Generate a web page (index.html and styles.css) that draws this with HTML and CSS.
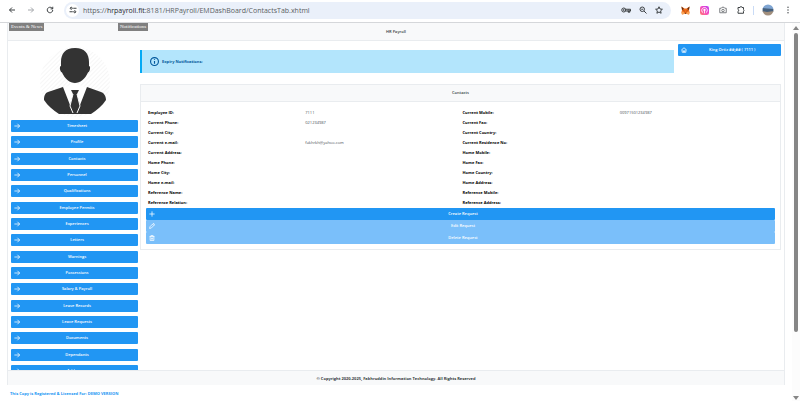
FILE: index.html
```html
<!DOCTYPE html>
<html lang="en">
<head>
<meta charset="utf-8">
<title>HR Payroll</title>
<meta name="viewport" content="width=device-width, initial-scale=1">
<link rel="stylesheet" href="styles.css">
</head>
<body>
<svg class="defs" aria-hidden="true">
  <symbol id="arrow" viewBox="0 0 16 16"><path d="M1 8h14M9 2l6 6-6 6"/></symbol>
</svg>
<header class="toolbar">
  <div class="history">
    <button aria-label="Back"><svg class="ico" viewBox="0 0 16 16"><path d="M14 8H3M8 3L3 8l5 5"/></svg></button>
    <button aria-label="Forward" class="dim"><svg class="ico" viewBox="0 0 16 16"><path d="M2 8h11M8 3l5 5-5 5"/></svg></button>
    <button aria-label="Reload"><svg class="ico" viewBox="0 0 16 16"><path d="M13.500 8A5.500 5.500 0 1 1 11.800 4L13.500 5.600M13.500 1.500v4.300H9.200"/></svg></button>
  </div>
  <div class="address">
    <button class="site" aria-label="Site information"><svg class="ico" viewBox="0 0 16 16"><circle cx="4.500" cy="4.500" r="2"/><path d="M8.500 4.500H15M1 11.500h6.500"/><circle cx="11.500" cy="11.500" r="2"/></svg></button>
    <div class="url">https://<b>hrpayroll.fit</b>:8181/HRPayroll/EMDashBoard/ContactsTab.xhtml</div>
    <button aria-label="Passwords"><svg class="ico wide" viewBox="0 0 20 16"><circle cx="5.500" cy="8" r="4"/><circle cx="5.500" cy="8" r="1"/><path d="M9.500 6.500H19v3.500h-1.500v2.500h-3V10H9"/><circle cx="15.500" cy="9.500" r="1.500"/></svg></button>
    <button aria-label="Zoom"><svg class="ico" viewBox="0 0 16 16"><circle cx="6.500" cy="6.500" r="4.500"/><path d="M10 10l5 5M4.500 6.500h4"/></svg></button>
    <button aria-label="Bookmark"><svg class="ico" viewBox="0 0 16 16"><path d="M8 1.500l2 4.500 4.800.5-3.600 3.200 1 4.800L8 12l-4.200 2.500 1-4.800L1.200 6.500 6 6z"/></svg></button>
  </div>
  <div class="extensions">
    <button aria-label="Wallet extension"><svg class="ico pic" viewBox="0 0 18 16"><path fill="#ef6c1a" d="M1 0l6 4h4l6-4-1 7 1 5-1 4-5-1.500H7L2 16l-1-4 1-5z"/><path fill="#5b2c14" d="M1 0l5 5-4 2zM17 0l-5 5 4 2zM4 8l3 .5L6.500 10zM14 8l-3 .5.5 1.500zM7.500 12.500h3l-.5 2H8z"/><path fill="#f9a254" d="M2 10l4 1 1 4-5 1-1-4zM16 10l-4 1-1 4 5 1 1-4z"/></svg></button>
    <button aria-label="Capture extension"><svg class="ico pic" viewBox="0 0 16 16"><defs><linearGradient id="pink" x1="1" y1="0" x2="0" y2="1"><stop offset="0" stop-color="#b83af5"/><stop offset=".5" stop-color="#f64cc0"/><stop offset="1" stop-color="#ff7b6b"/></linearGradient></defs><rect width="16" height="16" rx="4" fill="url(#pink)"/><path d="M5.500 12A5 5 0 1 1 10.500 12M8 8v5" fill="none" stroke="#fff" stroke-width="1.500"/><circle cx="8" cy="7" r="2" fill="#fff"/></svg></button>
    <button aria-label="Screenshot extension" class="gray"><svg class="ico" viewBox="0 0 16 16"><path d="M1.500 4.500h3L6 2.500h4l1.500 2h3v9h-13z"/><circle cx="8" cy="9" r="2.500"/></svg></button>
    <button aria-label="Extensions"><svg class="ico" viewBox="0 0 16 16"><path d="M2 3h4a2 1.800 0 0 1 4 0h3v4a1.800 2 0 0 1 0 3.500V14.500H2v-4a1.800 1.800 0 0 0 0-3.500z"/></svg></button>
    <span class="divider"></span>
    <button aria-label="Profile"><svg class="photo" viewBox="0 0 12 12"><clipPath id="disc"><circle cx="6" cy="6" r="5.500"/></clipPath><g clip-path="url(#disc)"><path fill="#7fa5d2" d="M0 0h12v5H0z"/><path fill="#46607c" d="M0 4l5 .5L12 5v3H0z"/><path fill="#a28f7d" d="M0 7l5 1 7-1v5H0z"/></g></svg></button>
    <button aria-label="Menu"><svg class="ico solid" viewBox="0 0 16 16"><circle cx="8" cy="2.500" r="1.400"/><circle cx="8" cy="8" r="1.400"/><circle cx="8" cy="13.500" r="1.400"/></svg></button>
  </div>
</header>

<div class="viewport">
  <div class="page">
    <div class="frame">
      <div class="title">HR Payroll
        <span class="tag tag-events">Events &amp; News</span>
        <span class="tag tag-notices">Notifications</span>
      </div>
      <div class="columns">
        <aside class="sidebar">
          <svg class="avatar" viewBox="0 0 72 72" role="img" aria-label="Employee photo">
            <defs><pattern id="hatch" width="3" height="3" patternUnits="userSpaceOnUse" patternTransform="rotate(45)"><path d="M0 0v3" stroke="#ededed"/></pattern></defs>
            <circle cx="36" cy="36" r="35" fill="url(#hatch)"/>
            <path fill="#fff" d="M24 42l10-4h4l10 4-7 25H31z"/>
            <path fill="#333" d="M36 2c10 0 14 6 14 14v4c2 0 1 6-1 6.500C46 33 41 37 36 37s-10-4-13-10.500C21 26 20 20 22 20v-4C22 8 26 2 36 2z"/>
            <path fill="#333" d="M24 41l7 18 3-11-2-4h8l-2 4 3 11 7-18 14 5c3 1 5 4 5 8-4 6-9 10-15 14H20C14 64 9 60 5 54c0-4 1-7 4-8z"/>
            <path fill="none" stroke="#fff" stroke-width="1" d="M34 48l-3 12 3 7M38 48l3 12-3 7"/>
          </svg>
          <nav class="menu">
            <button><svg><use href="#arrow"/></svg><span>Timesheet</span></button>
            <button><svg><use href="#arrow"/></svg><span>Profile</span></button>
            <button><svg><use href="#arrow"/></svg><span>Contacts</span></button>
            <button><svg><use href="#arrow"/></svg><span>Personnel</span></button>
            <button><svg><use href="#arrow"/></svg><span>Qualifications</span></button>
            <button><svg><use href="#arrow"/></svg><span>Employee Permits</span></button>
            <button><svg><use href="#arrow"/></svg><span>Experiences</span></button>
            <button><svg><use href="#arrow"/></svg><span>Letters</span></button>
            <button><svg><use href="#arrow"/></svg><span>Warnings</span></button>
            <button><svg><use href="#arrow"/></svg><span>Possessions</span></button>
            <button><svg><use href="#arrow"/></svg><span>Salary &amp; Payroll</span></button>
            <button><svg><use href="#arrow"/></svg><span>Leave Records</span></button>
            <button><svg><use href="#arrow"/></svg><span>Leave Requests</span></button>
            <button><svg><use href="#arrow"/></svg><span>Documents</span></button>
            <button><svg><use href="#arrow"/></svg><span>Dependants</span></button>
            <button><svg><use href="#arrow"/></svg><span>Addresses</span></button>
          </nav>
        </aside>
        <main>
          <div class="top">
            <div class="notice"><svg viewBox="0 0 16 16"><circle cx="8" cy="8" r="7"/><path d="M8 7v5M8 4v1.500"/></svg><span>Expiry Notifications:</span></div>
            <button class="user"><svg viewBox="0 0 16 16"><path d="M1 8l7-6 7 6M3 7v7h10V7M6.500 14v-4h3v4"/></svg><span>King Ortiz ##;## ( 7111 )</span></button>
          </div>
          <section class="panel">
            <h2>Contacts</h2>
            <div class="panel-body">
              <table>
                <tr><th>Employee ID:</th><td>7111</td><th>Current Mobile:</th><td>00971501234987</td></tr>
                <tr><th>Current Phone:</th><td>021234987</td><th>Current Fax:</th><td></td></tr>
                <tr><th>Current City:</th><td></td><th>Current Country:</th><td></td></tr>
                <tr><th>Current e-mail:</th><td>fakhrkh@yahoo.com</td><th>Current Residence No:</th><td></td></tr>
                <tr><th>Current Address:</th><td></td><th>Home Mobile:</th><td></td></tr>
                <tr><th>Home Phone:</th><td></td><th>Home Fax:</th><td></td></tr>
                <tr><th>Home City:</th><td></td><th>Home Country:</th><td></td></tr>
                <tr><th>Home e-mail:</th><td></td><th>Home Address:</th><td></td></tr>
                <tr><th>Reference Name:</th><td></td><th>Reference Mobile:</th><td></td></tr>
                <tr><th>Reference Relation:</th><td></td><th>Reference Address:</th><td></td></tr>
              </table>
              <div class="actions">
                <button><svg viewBox="0 0 16 16"><path d="M8 1v14M1 8h14"/></svg><span>Create Request</span></button>
                <button disabled><svg viewBox="0 0 16 16"><path d="M1.500 14.500l1-4.500 8.500-8.500h2l1.500 1.500v2L6 13.500zM9.500 3l3.500 3.500"/></svg><span>Edit Request</span></button>
                <button disabled><svg viewBox="0 0 16 16"><path d="M1.500 4h13M5 4V1.500h6V4M3 4v10.500h10V4M6.500 7v5M9.500 7v5"/></svg><span>Delete Request</span></button>
              </div>
            </div>
          </section>
        </main>
      </div>
      <footer>© Copyright 2020-2025, Fakhruddin Information Technology. All Rights Reserved</footer>
    </div>
    <p class="license"><a href="#">This Copy is Registered &amp; Licensed For: DEMO VERSION</a></p>
  </div>
  <div class="scrollbar" aria-hidden="true"><i class="up"></i><i class="thumb"></i><i class="down"></i></div>
</div>
</body>
</html>
```
FILE: styles.css
```css
* { box-sizing: border-box; }

body {
  margin: 0;
  height: 100vh;
  display: flex;
  flex-direction: column;
  overflow: hidden;
  background: #fff;
  color: #343a40;
  font: 4px/6px "Open Sans", "Noto Sans", sans-serif;
}

button {
  border: 0;
  padding: 0;
  background: none;
  color: inherit;
  font: inherit;
}

svg { display: block; fill: none; stroke: currentColor; }
.defs { position: absolute; width: 0; height: 0; }

/* Browser toolbar */
.toolbar {
  flex: none;
  height: 23px;
  display: flex;
  align-items: center;
  padding: 0 8px 2px;
  border-bottom: 1px solid #d5d7da;
  color: #3c4043;
}
.history { display: flex; gap: 11px; margin-right: 10px; }
.ico { width: 8px; height: 8px; stroke-width: 2; }
.wide { width: 10px; }
.pic { width: 9px; height: 9px; stroke: none; }
.solid { fill: currentColor; stroke: none; }
.dim { color: #a5a8ac; }
.gray { color: #7c7f83; }
.address {
  flex: 1;
  height: 17px;
  display: flex;
  align-items: center;
  gap: 8px;
  padding: 0 8px 0 2px;
  border-radius: 9px;
  background: #eaf0fa;
}
.site {
  width: 13px;
  height: 13px;
  display: grid;
  place-items: center;
  border-radius: 50%;
  background: #fff;
  margin-right: -4px;
}
.url { flex: 1; font-size: 7px; line-height: 15px; color: #5a5e63; white-space: nowrap; }
.url b { font-weight: 400; color: #27292c; }
.extensions { display: flex; align-items: center; gap: 10px; padding-left: 10px; }
.divider { width: 1px; height: 9px; background: #c9dbf6; margin: 0 -2px; }
.photo { width: 12px; height: 12px; stroke: none; }

/* Page area beside the scrollbar */
.viewport { flex: 1; min-height: 0; display: flex; }
.page { flex: 1; min-width: 0; display: flex; flex-direction: column; padding: 0 7px; }
.frame {
  flex: 1;
  min-height: 0;
  display: flex;
  flex-direction: column;
  border: solid #e9ecef;
  border-width: 0 1px;
}
.title, .panel h2, footer {
  flex: none;
  display: flex;
  align-items: center;
  justify-content: center;
  background: #f8f9fa;
  font-size: 4px;
  font-weight: 600;
}
.title { position: relative; height: 18px; border-bottom: 1px solid #e9ecef; }
.tag {
  position: absolute;
  top: 0;
  padding: 0 2px;
  background: #808080;
  color: #fff;
  font: 5px/8px "Liberation Serif", serif;
}
.tag-events { left: 1px; }
.tag-notices { left: 110px; }

.columns {
  flex: 1;
  min-height: 0;
  display: grid;
  grid-template-columns: 16.5% minmax(0, 1fr);
  grid-template-rows: minmax(0, 1fr);
  gap: 2px;
  padding: 0 3px;
}
.sidebar { display: flex; flex-direction: column; min-height: 0; }
.avatar { flex: none; width: 72px; height: 72px; margin: 5px auto 2px; stroke: none; }
.menu {
  flex: 1;
  min-height: 0;
  display: grid;
  grid-template-rows: repeat(15, minmax(0, 1fr)) 5px;
  overflow: hidden;
}
.menu button, .user, .actions button {
  display: flex;
  align-items: center;
  height: 12px;
  padding: 0 3px;
  border-radius: 1px;
  background: #2196f3;
  color: #fff;
  font-weight: 600;
}
.menu svg, .user svg, .actions svg { width: 6px; height: 6px; stroke-width: 2; }
.menu span, .user span, .actions span { flex: 1; padding-right: 1px; text-align: center; }

.top { display: flex; gap: 4px; align-items: flex-start; padding-top: 3px; }
.notice {
  flex: 1;
  height: 23px;
  display: flex;
  align-items: center;
  gap: 3px;
  margin-top: 6px;
  padding-left: 8px;
  border-left: 2px solid #03a9f4;
  background: #b3e5fc;
  color: #01579b;
  font-weight: 700;
}
.notice svg { width: 9px; height: 9px; stroke-width: 2; }
.user { width: 16%; }

.panel { margin-top: 11px; border: 1px solid #e9ecef; }
.panel h2 { height: 17px; margin: 0; border-bottom: 1px solid #e9ecef; }
.panel-body { padding: 6px 5px 5px; }
table { width: 100%; table-layout: fixed; border-collapse: collapse; }
th, td { height: 10px; padding: 0 2px; text-align: left; color: #495057; }
th { color: #000; font-weight: 700; }
.actions { display: flex; flex-direction: column; }
.actions button:disabled { background: #7abffa; }

footer { height: 15px; border-top: 1px solid #e9ecef; font-weight: 700; padding-top: 2px; }
.license { flex: none; margin: 0; height: 16px; padding: 6px 3px 0; font-weight: 700; }
.license a { color: #2196f3; text-decoration: none; }

.scrollbar {
  flex: none;
  width: 8px;
  display: flex;
  flex-direction: column;
  align-items: center;
  padding: 3px 0 1px;
  background: #fcfcfc;
}
.up, .down { border: solid transparent; border-width: 0 3px; }
.up { border-bottom: 4px solid #858585; }
.down { border-top: 4px solid #858585; margin-top: auto; }
.thumb { width: 4px; height: 80%; margin-top: 3px; border-radius: 2px; background: #858585; }
```
